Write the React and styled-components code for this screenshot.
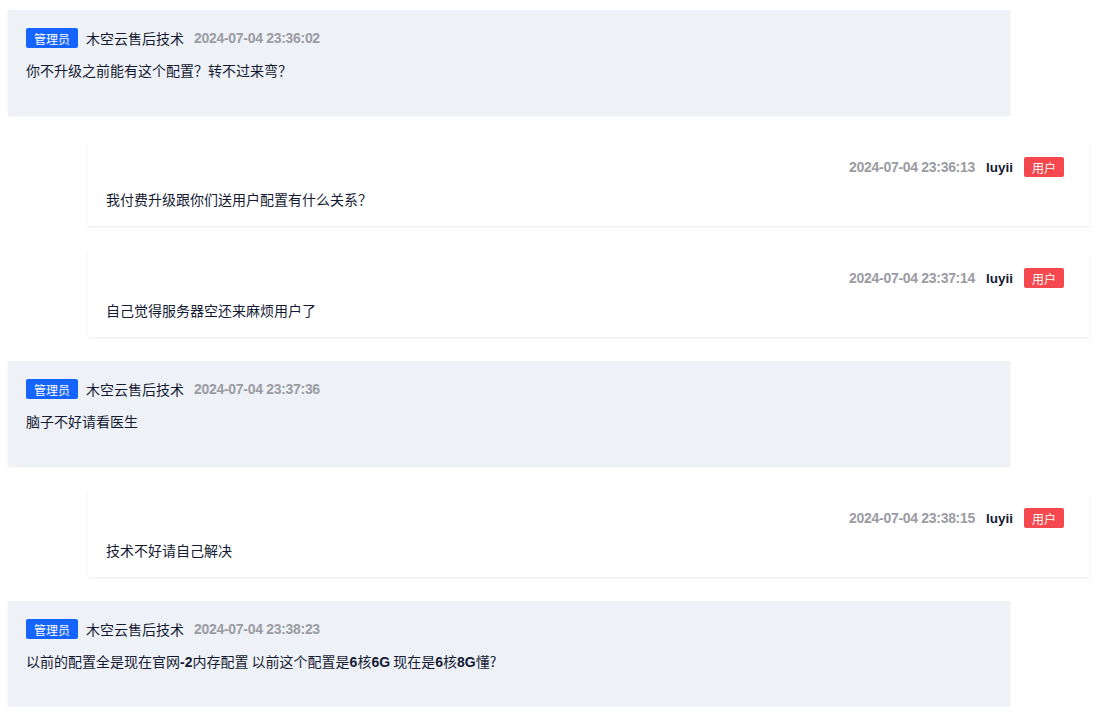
import React from "react";
import styled, { createGlobalStyle } from "styled-components";

const GlobalStyle = createGlobalStyle`
    body {
        margin: 0;
        background: #fff;
        font-family: "Noto Sans CJK SC", "Noto Sans", sans-serif;
        color: #141a33;
    }
`;

const List = styled.div`
    padding: 10px 3px 0 8px;
    display: flex;
    flex-direction: column;
    gap: 24px;
`;

const Card = styled.div`
    box-sizing: border-box;
    width: 1002px;
    align-self: ${(p) => (p.$mine ? "flex-end" : "flex-start")};
    background: ${(p) => (p.$mine ? "#ffffff" : "#eef1f6")};
    box-shadow: 0 1px 2px rgba(0, 0, 0, 0.08);
    padding: ${(p) => (p.$mine ? "18px 26px 16px 18px" : "18px 18px 34px 18px")};
`;

const Header = styled.div`
    display: flex;
    align-items: center;
    justify-content: ${(p) => (p.$mine ? "flex-end" : "flex-start")};
    height: 20px;
`;

const Badge = styled.span`
    display: inline-flex;
    align-items: center;
    justify-content: center;
    height: 20px;
    padding: 0 8px;
    border-radius: 2px;
    font-size: 12px;
    color: #fff;
    background: ${(p) => (p.$kind === "admin" ? "#1664ff" : "#f5484e")};
`;

const Name = styled.span`
    font-size: ${(p) => (p.$mine ? "13.5px" : "14px")};
    margin: ${(p) => (p.$mine ? "0 11px" : "0 10px 0 8px")};
    font-weight: ${(p) => (p.$mine ? 700 : 400)};
    font-family: ${(p) =>
        p.$mine ? '"Liberation Sans", sans-serif' : '"Noto Sans CJK SC", sans-serif'};
    color: #141a33;
`;

const Time = styled.span`
    font-family: "Liberation Sans", sans-serif;
    font-weight: 700;
    font-size: 14px;
    letter-spacing: -0.3px;
    color: #9b9ca3;
`;

const Body = styled.div`
    margin-top: 11px;
    font-size: 14px;
    line-height: 22px;
    color: #141a33;
`;

const Latin = styled.b`
    font-family: "Liberation Sans", sans-serif;
    font-weight: 700;
`;

const messages = [
    { id: 1, mine: false, time: "2024-07-04 23:36:02", text: ["你不升级之前能有这个配置？转不过来弯？"] },
    { id: 2, mine: true, time: "2024-07-04 23:36:13", text: ["我付费升级跟你们送用户配置有什么关系？"] },
    { id: 3, mine: true, time: "2024-07-04 23:37:14", text: ["自己觉得服务器空还来麻烦用户了"] },
    { id: 4, mine: false, time: "2024-07-04 23:37:36", text: ["脑子不好请看医生"] },
    { id: 5, mine: true, time: "2024-07-04 23:38:15", text: ["技术不好请自己解决"] },
    {
        id: 6,
        mine: false,
        time: "2024-07-04 23:38:23",
        text: [
            "以前的配置全是现在官网",
            { b: "-2" },
            "内存配置 以前这个配置是",
            { b: "6" },
            "核",
            { b: "6G" },
            " 现在是",
            { b: "6" },
            "核",
            { b: "8G" },
            "懂?",
        ],
    },
];

const Message = ({ mine, time, text }) => (
    <Card $mine={mine}>
        {mine ? (
            <Header $mine>
                <Time>{time}</Time>
                <Name $mine>luyii</Name>
                <Badge $kind="user">用户</Badge>
            </Header>
        ) : (
            <Header>
                <Badge $kind="admin">管理员</Badge>
                <Name>木空云售后技术</Name>
                <Time>{time}</Time>
            </Header>
        )}
        <Body>
            {text.map((part, index) =>
                typeof part === "string" ? part : <Latin key={index}>{part.b}</Latin>
            )}
        </Body>
    </Card>
);

const App = () => (
    <>
        <GlobalStyle />
        <List>
            {messages.map((m) => (
                <Message key={m.id} {...m} />
            ))}
        </List>
    </>
);

export default App;
